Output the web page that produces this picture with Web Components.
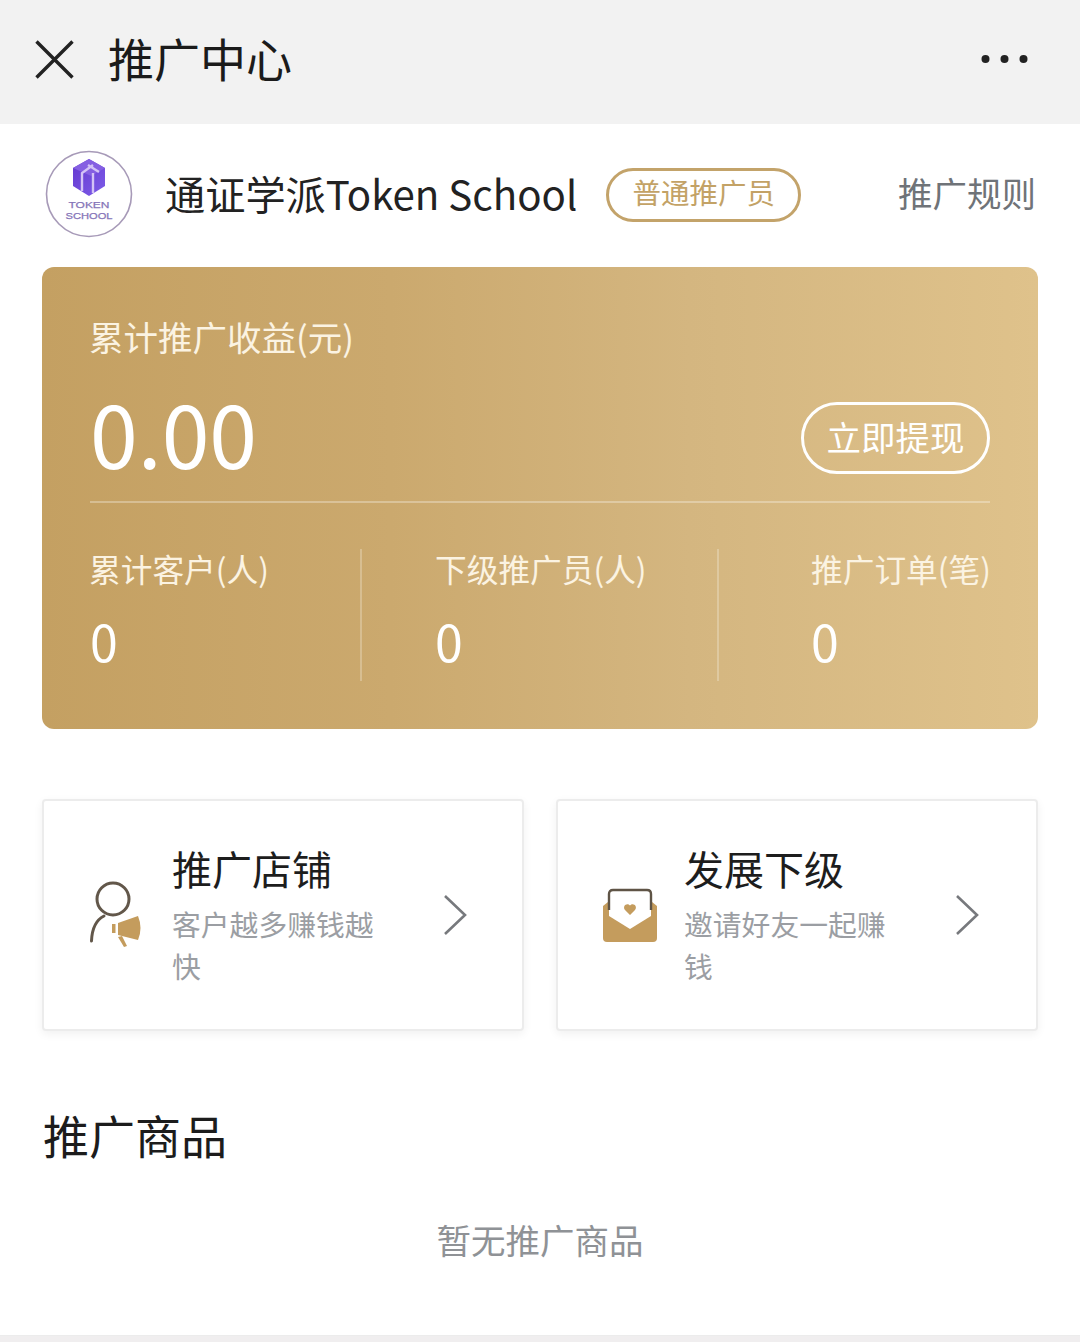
<!DOCTYPE html>
<html lang="zh"><head><meta charset="utf-8"><title>推广中心</title>
<style>
html,body{margin:0;padding:0;background:#fff}
body{width:1080px;height:1342px;overflow:hidden;font-family:"Noto Sans CJK SC","Noto Sans",sans-serif;display:flex;flex-direction:column}
</style></head><body>
<promo-header title-text="推广中心"></promo-header>
<promo-profile name="通证学派Token School" badge="普通推广员" link="推广规则"></promo-profile>
<earnings-card></earnings-card>
<div id="actions" style="display:grid;grid-template-columns:482px 482px;gap:32px;padding:70px 42px 0">
  <action-card heading="推广店铺" icon="shop">客户越多赚钱越快</action-card>
  <action-card heading="发展下级" icon="mail">邀请好友一起赚钱</action-card>
</div>
<goods-section heading="推广商品" empty="暂无推广商品"></goods-section>
<script>
function def(name, render){
  customElements.define(name, class extends HTMLElement{
    connectedCallback(){
      if(this.shadowRoot) return;
      this.attachShadow({mode:'open'}).innerHTML = render(this);
    }
  });
}
def('promo-header', el => `<style>
:host{display:flex;align-items:center;height:124px;background:#f2f2f2;color:#1b1b1b;padding:0 52px 6px 35px;box-sizing:border-box;flex:none}
svg{display:block;flex:none}
h1{margin:0 0 4px 34px;font-size:46px;font-weight:400;line-height:60px;flex:1}
</style>
<svg width="39" height="39" viewBox="0 0 39 39"><path d="M1.5 1.5 37.5 37.5M37.5 1.5 1.5 37.5" stroke="#222" stroke-width="3.4" fill="none"/></svg>
<h1>${el.getAttribute('title-text')}</h1>
<svg width="47" height="10" viewBox="0 0 47 10"><g fill="#222"><circle cx="4.5" cy="5" r="4"/><circle cx="23.5" cy="5" r="4"/><circle cx="42.5" cy="5" r="4"/></g></svg>`);
def('promo-profile', el => `<style>
:host{display:flex;align-items:center;height:143px;padding:0 44px 0 45px;box-sizing:border-box;flex:none}
svg{display:block;flex:none;margin-top:-3px}
.n{margin-left:32px;font-size:40.2px;line-height:56px;color:#222;white-space:nowrap;margin-bottom:6px}
.b{margin-left:29px;width:195px;height:54px;box-sizing:border-box;border:3px solid #c3a36a;border-radius:27px;color:#c3a266;font-size:28.500px;display:flex;align-items:center;justify-content:center;padding:0 0 6px;flex:none;margin-bottom:2px}
.l{margin-left:auto;font-size:34.500px;color:#6f7378;white-space:nowrap;margin-bottom:8px}
</style>
<svg width="88" height="88" viewBox="0 0 88 88">
<defs><linearGradient id="g" x1="0" y1="0" x2="1" y2="1"><stop offset="0" stop-color="#6438cf"/><stop offset="1" stop-color="#7d5ce8"/></linearGradient></defs>
<circle cx="44" cy="44" r="42.500" fill="#fff" stroke="#a79ab8" stroke-width="1.6"/>
<path d="M44 9 60 18V36L44 46 28 36V18Z" fill="url(#g)"/>
<path d="M28 18 44 9 60 18 46 26 44 25Z" fill="#8560e2"/>
<path d="M37 41V23L48 15M43 15 54 22M48 23V43" stroke="#d3c3f6" stroke-width="2.400" fill="none"/>
<text x="44" y="58" text-anchor="middle" font-family="Liberation Sans,sans-serif" font-size="9.500" fill="#8574b8" stroke="#8574b8" stroke-width=".25" textLength="41" lengthAdjust="spacingAndGlyphs">TOKEN</text>
<text x="44" y="69" text-anchor="middle" font-family="Liberation Sans,sans-serif" font-size="9.500" fill="#8574b8" stroke="#8574b8" stroke-width=".25" textLength="47" lengthAdjust="spacingAndGlyphs">SCHOOL</text>
</svg>
<span class="n">${el.getAttribute('name')}</span>
<span class="b">${el.getAttribute('badge')}</span>
<span class="l">${el.getAttribute('link')}</span>`);
def('earnings-card', () => `<style>
:host{display:block;margin:0 42px;height:462px;box-sizing:border-box;border-radius:12px;background:linear-gradient(90deg,#c4a062 0%,#cba96e 35%,#d4b680 65%,#dfc28b 100%);color:#fff;padding:46px 48px 0;flex:none}
.t{font-size:34.500px;line-height:46px;color:#fbf3e2;white-space:nowrap;margin-left:-1px}
.m{display:flex;justify-content:space-between;align-items:flex-start;margin-top:13px;height:129px;border-bottom:2px solid rgba(255,255,255,.3)}
.v{font-size:86px;line-height:107px;margin-top:6px}
.btn{width:189px;height:72px;box-sizing:border-box;border:3px solid #fff;border-radius:36px;display:flex;align-items:center;justify-content:center;font-size:34.500px;padding-bottom:4px;margin:30px 0 0 0}
.s{display:grid;grid-template-columns:270px 357px 1fr;margin-top:46px;height:132px}
.c{display:flex;flex-direction:column}
.c+.c{border-left:2px solid rgba(255,255,255,.25)}
.c:nth-child(2){padding-left:73px}.c:nth-child(3){padding-left:92px}
.k{font-size:31.700px;line-height:44px;margin-top:-3px;white-space:nowrap;color:#fbf3e2}
.c:first-child .k{margin-left:-1px}
.n{font-size:50px;line-height:70px;margin-top:15px}
</style>
<div class="t">累计推广收益(元)</div>
<div class="m"><span class="v">0.00</span><span class="btn">立即提现</span></div>
<div class="s">
<div class="c"><span class="k">累计客户(人)</span><span class="n">0</span></div>
<div class="c"><span class="k">下级推广员(人)</span><span class="n">0</span></div>
<div class="c"><span class="k">推广订单(笔)</span><span class="n">0</span></div>
</div>`);
const icons = {
shop:`<svg width="56" height="68" viewBox="0 0 56 68"><circle cx="25" cy="18" r="16" fill="none" stroke="#62574a" stroke-width="3"/><path d="M3.500 60C4 48 8 39 16 35" fill="none" stroke="#62574a" stroke-width="3" stroke-linecap="round"/><g fill="#c49c5d"><path d="M24 43h3.500v9H24z"/><path d="M30 42 50 35Q55 47 50 59L30 54Z"/><path d="M30 56 34 55 39 65 36 66Z"/></g></svg>`,
mail:`<svg width="54" height="54" viewBox="0 0 54 54"><path d="M0 18 5 14H49L54 18V50Q54 54 50 54H4Q0 54 0 50Z" fill="#c49c5d"/><path d="M6 28V5Q6 2 9 2H45Q48 2 48 5V28L27 41Z" fill="#fff"/><path d="M6 22V6Q6 2 10 2H44Q48 2 48 6V22" fill="none" stroke="#5f5446" stroke-width="2.400"/><path d="M27 27 22 22C19 18 24 14 27 17.500 30 14 35 18 32 22Z" fill="#c49c5d"/></svg>`};
def('action-card', el => { const shop = el.getAttribute('icon')==='shop'; return `<style>
:host{display:flex;align-items:flex-start;height:232px;box-sizing:border-box;background:#fff;border:2px solid #ececec;border-radius:4px;box-shadow:0 3px 10px rgba(0,0,0,.06)}
.i{width:${shop?128:126}px;flex:none;height:100%;display:flex;justify-content:center;align-items:center;padding:0 0 0 ${shop?15:18}px;box-sizing:border-box}
.x{width:206px;flex:none;padding-top:39px}
h3{margin:0;font-size:40px;font-weight:400;line-height:56px;color:#1d1d1d;white-space:nowrap}
p{margin:7px 0 0;font-size:28.800px;line-height:42px;color:#9b9ea3}
.a{margin:0 ${shop?54:56}px 0 auto;align-self:center;display:block}
</style>
<div class="i">${icons[el.getAttribute('icon')]}</div>
<div class="x"><h3>${el.getAttribute('heading')}</h3><p><slot></slot></p></div>
<svg class="a" width="26" height="42" viewBox="0 0 26 42"><path d="M3 2 23 21 3 40" fill="none" stroke="#77797d" stroke-width="2.600"/></svg>`});
def('goods-section', el => `<style>
:host{display:flex;flex-direction:column;padding:70px 0 0;flex:1}
h2{margin:0 43px;font-size:46px;font-weight:400;line-height:66px;color:#1c1c1c}
p{margin:47px 43px 0;text-align:center;font-size:34.500px;line-height:50px;color:#8f9296}
.strip{margin-top:auto;height:7px;background:#f0eeef;border-top:1px solid #ececec;box-sizing:border-box;flex:none}
</style>
<h2>${el.getAttribute('heading')}</h2>
<p>${el.getAttribute('empty')}</p>
<div class="strip"></div>`);
</script>
</body></html>
